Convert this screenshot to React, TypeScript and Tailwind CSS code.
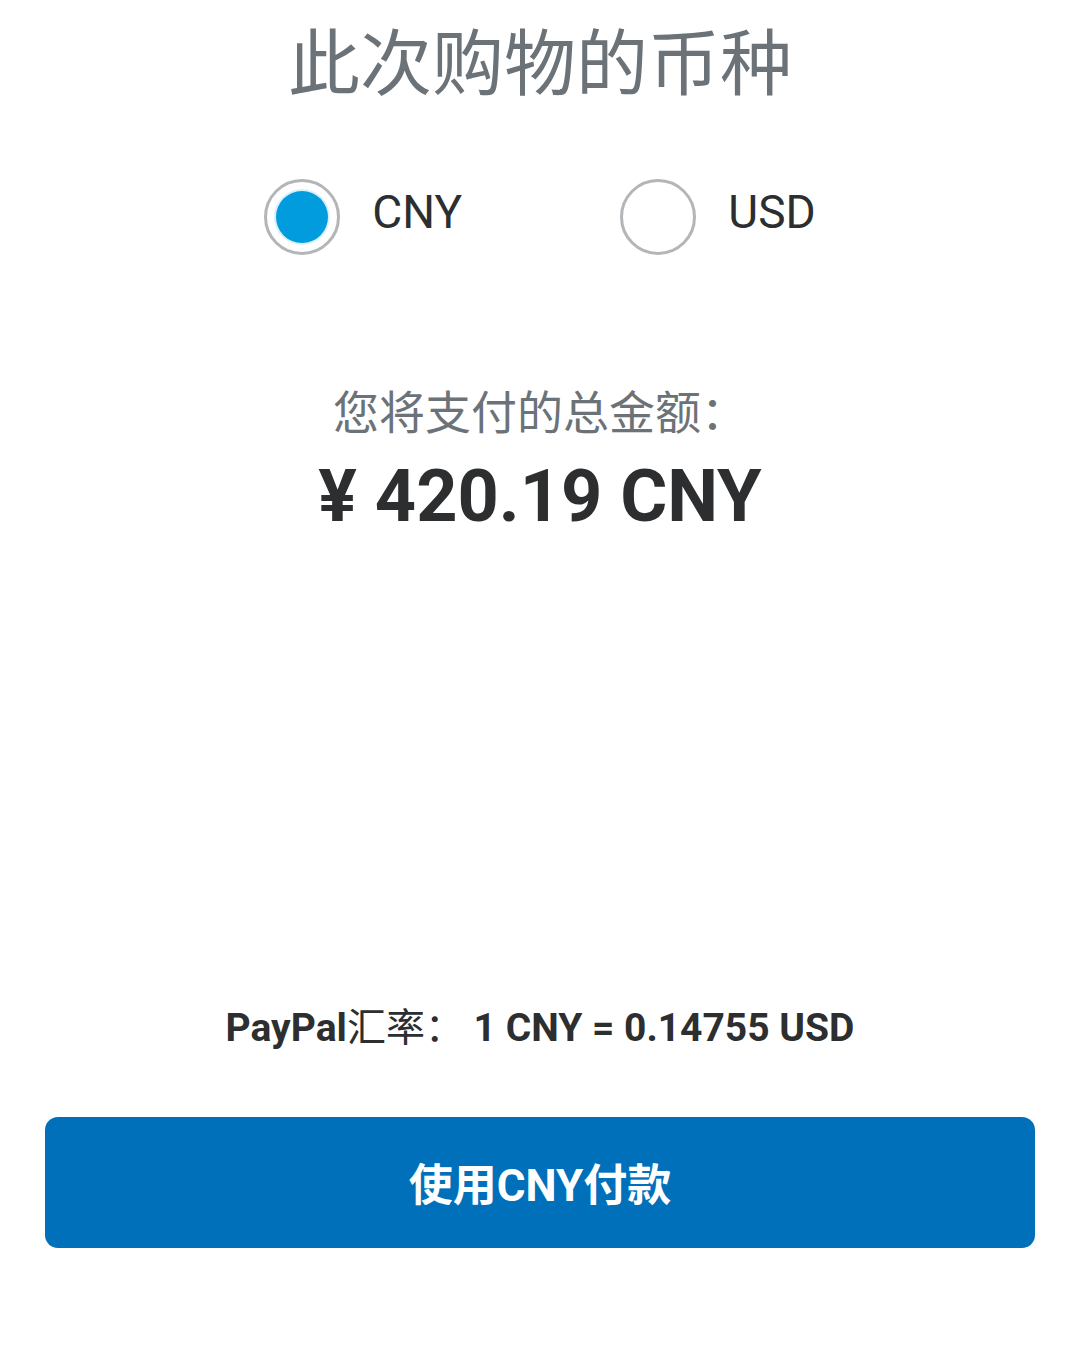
import { useState } from "react";

const FONT = "font-['Roboto','Noto_Sans_CJK_SC',sans-serif]";

type Currency = "CNY" | "USD";

function Radio({ checked }: { checked: boolean }) {
  return (
    <div className="w-[76px] h-[76px] rounded-full border-[3px] border-[#b3b6b8] bg-white flex items-center justify-center shrink-0">
      {checked && (
        <div className="w-[52px] h-[52px] rounded-full bg-[#009cde] shadow-[0_0_0_2px_rgba(0,156,222,0.15)]" />
      )}
    </div>
  );
}

export default function App() {
  const [currency, setCurrency] = useState<Currency>("CNY");

  return (
    <div className={`w-[1080px] h-[1350px] bg-white flex flex-col items-center pt-[25px] ${FONT}`}>
      {/* Heading */}
      <div className="h-[80px] flex items-center justify-center">
        <h1 className="text-[72px] leading-none font-normal text-[#6c7378]">此次购物的币种</h1>
      </div>

      {/* Currency picker */}
      <div className="mt-[74px] h-[76px] flex items-center">
        {(["CNY", "USD"] as Currency[]).map((c, i) => (
          <button
            key={c}
            onClick={() => setCurrency(c)}
            className={`flex items-center gap-[32px] ${i === 0 ? "w-[356px]" : ""}`}
          >
            <Radio checked={currency === c} />
            <span className="pb-[10px] text-[46px] leading-none text-[#2c2e2f]">{c}</span>
          </button>
        ))}
      </div>

      {/* Total */}
      <div className="mt-[133px] h-[50px] flex items-center justify-center">
        <p className="text-[46px] leading-none text-[#6c7378]">您将支付的总金额：</p>
      </div>
      <div className="mt-[19px] h-[80px] flex items-center justify-center">
        <p className="text-[72px] leading-none font-bold text-[#2c2e2f]">¥ 420.19 CNY</p>
      </div>

      {/* Exchange rate */}
      <div className="mt-[466px] h-[50px] flex items-center justify-center">
        <p className="text-[39px] leading-none font-bold text-[#2c2e2f]">
          PayPal<span className="font-normal">汇率：</span> 1 CNY = 0.14755 USD
        </p>
      </div>

      {/* Pay button */}
      <button className="mt-[64px] w-[990px] h-[131px] rounded-[13px] bg-[#0070ba] flex items-center justify-center">
        <span className="pt-[6px] text-[44px] leading-none font-bold text-white">使用CNY付款</span>
      </button>
    </div>
  );
}
